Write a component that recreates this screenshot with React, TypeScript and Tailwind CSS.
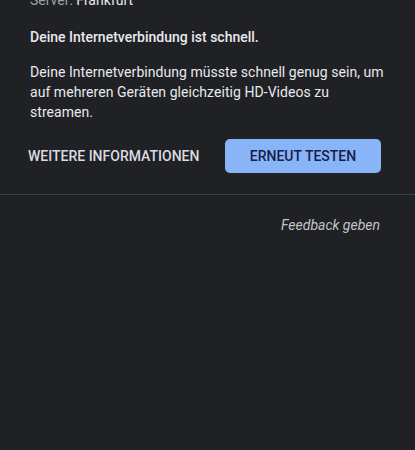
import React from 'react';

const App: React.FC = () => {
  return (
    <div
      className="w-[415px] h-[450px] overflow-hidden bg-[#202124] text-[#e8eaed]"
      style={{ fontFamily: 'Roboto, "Noto Sans", sans-serif' }}
    >
      {/* Result summary */}
      <div className="px-[30px] -mt-[10px]">
        <p className="text-[14px] leading-[20px] text-[#9aa0a6]">
          Server: <span className="text-[#e8eaed]">Frankfurt</span>
        </p>
        <p className="mt-[17px] text-[14px] leading-[20px] font-medium text-[#e8eaed]">
          Deine Internetverbindung ist schnell.
        </p>
        <p className="mt-[15px] text-[14px] leading-[20px] tracking-[0.05px] text-[#e8eaed]">
          Deine Internetverbindung müsste schnell genug sein, um auf mehreren Geräten gleichzeitig HD-Videos zu
          streamen.
        </p>
      </div>

      {/* Actions */}
      <div className="flex items-center justify-between pl-[28px] pr-[34px] mt-[17px]">
        <button className="text-[14px] font-medium text-[#dadce0]">WEITERE INFORMATIONEN</button>
        <button className="w-[156px] h-[34px] rounded-[5px] bg-[#8ab4f8] text-[14px] font-medium text-[#14204a]">
          ERNEUT TESTEN
        </button>
      </div>

      <div className="mt-[21px] h-px bg-[#3c4043]" />

      <div className="flex justify-end pr-[35px] mt-[20px]">
        <span className="text-[14px] italic text-[#c0c4c8]">Feedback geben</span>
      </div>
    </div>
  );
};

export default App;
